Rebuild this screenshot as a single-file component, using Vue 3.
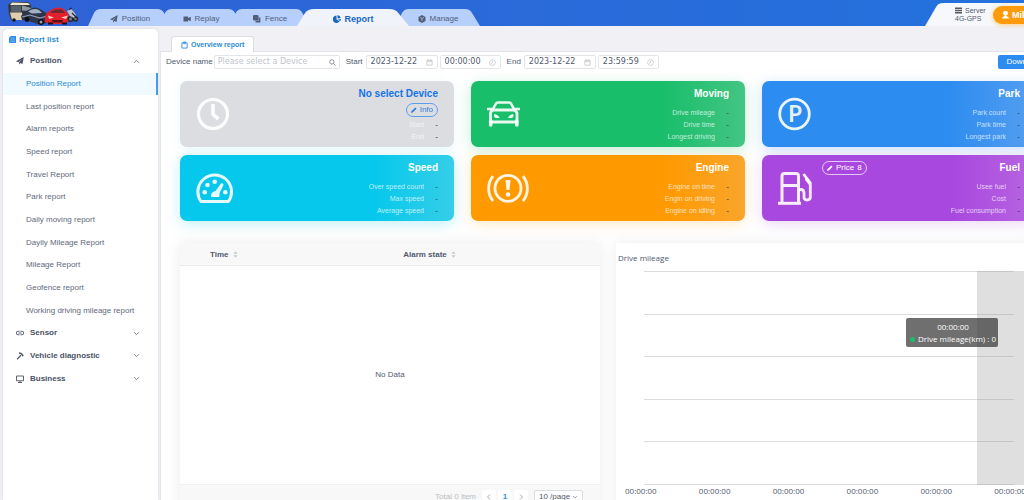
<script setup>
import { ref } from 'vue'

const tabs = [
  { name: 'Position', icon: 'plane' },
  { name: 'Replay', icon: 'video' },
  { name: 'Fence', icon: 'copy' },
  { name: 'Report', icon: 'pie', active: true },
  { name: 'Manage', icon: 'cube' }
]

const reports = [
  'Position Report',
  'Last position report',
  'Alarm reports',
  'Speed report',
  'Travel Report',
  'Park report',
  'Daily moving report',
  'Dayily Mileage Report',
  'Mileage Report',
  'Geofence report',
  'Working driving mileage report'
]
const activeReport = ref('Position Report')

const groups = [
  { name: 'Sensor', icon: 'link' },
  { name: 'Vehicle diagnostic', icon: 'hammer' },
  { name: 'Business', icon: 'monitor' }
]

const cards = [
  { key: 'device', title: 'No select Device', rows: ['Start', 'End'] },
  { key: 'moving', title: 'Moving', rows: ['Drive mileage', 'Drive time', 'Longest driving'] },
  { key: 'park', title: 'Park', rows: ['Park count', 'Park time', 'Longest park'] },
  { key: 'speed', title: 'Speed', rows: ['Over speed count', 'Max speed', 'Average speed'] },
  { key: 'engine', title: 'Engine', rows: ['Engine on time', 'Engin on driving', 'Engine on idling'] },
  { key: 'fuel', title: 'Fuel', rows: ['Usee fuel', 'Cost', 'Fuel consumption'] }
]

const device = ref('')
const startDate = ref('2023-12-22')
const startTime = ref('00:00:00')
const endDate = ref('2023-12-22')
const endTime = ref('23:59:59')
</script>

<template>
  <div class="app">
    <header class="topbar">
      <svg class="logo" viewBox="0 0 72 24" aria-hidden="true">
        <path d="M0 3 L4 0 H20 L23 3 L24 18 H3 L1 12Z" fill="#3a3838" />
        <path d="M3 3.500 H13 V10 H3Z" fill="#56626b" />
        <path d="M2 10.500 H14 L15 18 H4Z" fill="#e0cfae" />
        <path d="M14 3.500 L23 6 V9 L14 8.500Z" fill="#8d9aa3" />
        <path d="M4 .5 L20 1 L22 3 L2 3Z" fill="#efe6cf" />
        <circle cx="6" cy="18" r="1.800" fill="#161616" />
        <path d="M13 14 Q17 9 22 7 Q27 4 32 7 L38 11 L41 15 L38 21 L33 23 L20 19 L14 18Z" fill="#2c354c" />
        <path d="M20 9.500 Q26 5.500 31 8 L34 11 L24 11.500Z" fill="#a3afc2" />
        <path d="M14 15 L22 13 L32 16 L39 14" stroke="#8f9bb4" stroke-width="1.200" fill="none" />
        <circle cx="19" cy="17.500" r="2.400" fill="#0e0f14" />
        <circle cx="33" cy="20" r="2.900" fill="#0e0f14" />
        <circle cx="33" cy="20" r="1.500" fill="#9b9fa8" />
        <path d="M37 15 Q38 10 43 8 Q48 4.500 54 6 L59 10 Q62 14 61 19 L57 22 H42 L37 20Z" fill="#e3202b" />
        <path d="M43 9.500 Q48 6.500 54 7.500 L57 11 H43Z" fill="#6b2a33" />
        <path d="M40 13.500 L46 15.500 L41 17Z M53 15.500 L60 13.500 L58 17Z" fill="#fbc9c4" />
        <path d="M44 18 H55 L54 20.500 H45Z" fill="#5a1016" />
        <path d="M40 21.500 H45 M54 21.500 H59" stroke="#1b1014" stroke-width="2" />
        <circle cx="62.500" cy="17" r="2.400" fill="#6d737d" stroke="#22252c" stroke-width="1.300" />
        <circle cx="67.500" cy="17" r="2" fill="#6d737d" stroke="#22252c" stroke-width="1.300" />
        <path d="M59 9 L63 7 L66 10 L68 13 L66 16 L62 14Z" fill="#bcc3cc" />
        <path d="M61 7.500 L64 6 M64 11 L68 15" stroke="#272b34" stroke-width="1.200" />
      </svg>
      <nav class="tabs">
        <button v-for="tab in tabs" :key="tab.name" class="tab" :class="[tab.icon, { active: tab.active }]">
          <svg class="tab-shape" viewBox="0 0 84 17" preserveAspectRatio="none" aria-hidden="true">
            <path d="M0 17 L6 4 Q8 0 13 0 H69 Q74 0 76 4 L84 17Z" />
          </svg>
          <svg class="tab-icon" viewBox="0 0 16 16" aria-hidden="true">
            <path v-if="tab.icon === 'plane'" d="M15.500 0 L13 14 L8.500 12 L6 15.500 V11 L12 4.500 L4.500 10.300 L0 8.500Z" />
            <path v-if="tab.icon === 'video'" d="M1 3 H10 V6 L15.500 3.500 V12.500 L10 10 V13 H1Z" />
            <template v-if="tab.icon === 'copy'">
              <rect x="0" y="0" width="11" height="11" rx="2" />
              <path d="M13 5 V13 H5" fill="none" stroke="currentColor" stroke-width="3.500" />
            </template>
            <path v-if="tab.icon === 'pie'" d="M7 1 A7.500 7.500 0 1 0 13 13 L7 8.500Z M9 0 A7.500 7.500 0 0 1 15.500 6 L9 7Z M10 9 L16 8 A7 7 0 0 1 14 12.500Z" />
            <template v-if="tab.icon === 'cube'">
              <path d="M8 0 L15 4 V12 L8 16 L1 12 V4Z" />
              <path d="M4 4.800 L8 7 L12 4.800 M8 7 V12" fill="none" stroke="#bdd4fb" stroke-width="1.300" />
            </template>
          </svg>
          <span>{{ tab.name }}</span>
        </button>
      </nav>
      <div class="account">
        <svg class="account-shape" viewBox="0 0 130 23" preserveAspectRatio="none" aria-hidden="true">
          <path d="M0 23 L11 4 Q13 0 18 0 H130 V23Z" fill="#f7f8fb" />
        </svg>
        <div class="server">
          <div class="server-name">
            <svg viewBox="0 0 8 7" aria-hidden="true"><path d="M0 1 H8 M0 3.500 H8 M0 6 H8" stroke="#55595f" stroke-width="1.600" /></svg>
            Server
          </div>
          <div>4G-GPS</div>
        </div>
        <button class="user">
          <svg viewBox="0 0 8 9" aria-hidden="true"><path d="M4 0 A2.300 2.300 0 0 1 5 4.500 V5.500 Q8 6 8 8.500 H0 Q0 6 3 5.500 V4.500 A2.300 2.300 0 0 1 4 0Z" fill="#fff" /></svg>
          Mike
        </button>
      </div>
    </header>

    <div class="body">
      <aside class="sidebar">
        <h2 class="side-title">
          <svg viewBox="0 0 8 8" aria-hidden="true">
            <path d="M2 0 H8 V8 H1 Q0 8 0 7 V2Z" fill="#2d8cf0" />
            <path d="M2 2.500 H6.500 M2 4.500 H6.500 M1 6.500 H7" stroke="#a9d1fa" stroke-width=".6" />
          </svg>
          Report list
        </h2>
        <nav class="menu">
          <button class="group">
            <svg class="group-icon" viewBox="0 0 16 16" aria-hidden="true">
              <path d="M15.500 0 L13 14 L8.500 12 L6 15.500 V11 L12 4.500 L4.500 10.300 L0 8.500Z" fill="currentColor" />
            </svg>
            <span>Position</span>
            <svg class="chevron" viewBox="0 0 6 6" aria-hidden="true"><path d="M1 4 L3 2 L5 4" /></svg>
          </button>
          <a
            v-for="item in reports"
            :key="item"
            href="#"
            class="item"
            :class="{ active: item === activeReport }"
            @click.prevent="activeReport = item"
          >{{ item }}</a>
          <button v-for="group in groups" :key="group.name" class="group">
            <svg class="group-icon" viewBox="0 0 16 16" fill="none" stroke="currentColor" stroke-width="1.800" aria-hidden="true">
              <path v-if="group.icon === 'link'" d="M7 4.500 H4 A3.500 3.500 0 0 0 4 11.500 H7 M9 4.500 H12 A3.500 3.500 0 0 1 12 11.500 H9 M5 8 H11" />
              <template v-if="group.icon === 'hammer'">
                <path d="M2 14.500 L10 6.500" stroke-width="2.200" />
                <path d="M6 2 Q10 2 12 5 L14.500 8" stroke-width="3" />
              </template>
              <path v-if="group.icon === 'monitor'" d="M1 2 H15 V11.500 H1Z M4 15 H12 M8 12 V15" />
            </svg>
            <span>{{ group.name }}</span>
            <svg class="chevron" viewBox="0 0 6 6" aria-hidden="true"><path d="M1 2 L3 4 L5 2" /></svg>
          </button>
        </nav>
      </aside>

      <main class="main">
        <div class="pages">
          <button class="page-tab">
            <svg viewBox="0 0 8 9" aria-hidden="true"><path d="M1 2 H7 V8 H1Z M3 1 H5 V3 H3Z" fill="none" stroke="#2d8cf0" /></svg>
            Overview report
          </button>
        </div>

        <div class="content">
          <form class="filters" @submit.prevent>
            <label for="device">Device name</label>
            <div class="field device">
              <input id="device" v-model="device" type="text" placeholder="Please select a Device" />
              <svg viewBox="0 0 8 8" aria-hidden="true"><circle cx="3.300" cy="3.300" r="2.500" /><path d="M5.200 5.200 L7.500 7.500" /></svg>
            </div>
            <label for="start">Start</label>
            <div class="field date">
              <input id="start" v-model="startDate" type="text" />
              <svg class="pale" viewBox="0 0 8 8" aria-hidden="true"><path d="M1 1.500 H7 V7 H1Z M1 3 H7 M2.500 0 V2 M5.500 0 V2" /></svg>
            </div>
            <div class="field time">
              <input v-model="startTime" type="text" aria-label="Start time" />
              <svg class="pale" viewBox="0 0 8 8" aria-hidden="true"><circle cx="4" cy="4" r="3.300" /><path d="M4 2 V4 L2.500 5" /></svg>
            </div>
            <label for="end">End</label>
            <div class="field date">
              <input id="end" v-model="endDate" type="text" />
              <svg class="pale" viewBox="0 0 8 8" aria-hidden="true"><path d="M1 1.500 H7 V7 H1Z M1 3 H7 M2.500 0 V2 M5.500 0 V2" /></svg>
            </div>
            <div class="field time">
              <input v-model="endTime" type="text" aria-label="End time" />
              <svg class="pale" viewBox="0 0 8 8" aria-hidden="true"><circle cx="4" cy="4" r="3.300" /><path d="M4 2 V4 L2.500 5" /></svg>
            </div>
            <button class="download" type="button">Download</button>
          </form>

          <section class="cards">
            <article v-for="card in cards" :key="card.key" class="card" :class="card.key">
              <svg class="card-icon" viewBox="0 0 44 36" fill="none" stroke="currentColor" aria-hidden="true">
                <template v-if="card.key === 'device'">
                  <circle cx="17" cy="18" r="14.500" stroke-width="3.200" />
                  <path d="M17 8 V18.500 L22.500 23" stroke-width="3.600" />
                </template>
                <template v-if="card.key === 'moving'">
                  <path d="M5.500 14 L9 7.500 Q9.500 6.500 11 6.500 H22 Q23.500 6.500 24 7.500 L27.500 14" stroke-width="2.600" />
                  <path d="M3.500 26 V17 Q4 14 7 14 H26 Q29 14 30 17 V26Z" stroke-width="2.800" />
                  <path d="M0 13 H5 M28 13 H33" stroke-width="2.600" />
                  <path d="M3.700 25 V29 M29.800 25 V29" stroke-width="3.600" stroke-linecap="round" />
                  <path d="M7.500 18 Q12 19 12.500 22 H8.500 Q6 20.500 7.500 18Z M26 18 Q21.500 19 21 22 H25 Q27.500 20.500 26 18Z" fill="currentColor" stroke="none" />
                </template>
                <template v-if="card.key === 'park'">
                  <circle cx="16.500" cy="18" r="14.800" stroke-width="2.800" />
                  <text x="17" y="26" class="park-sign">P</text>
                </template>
                <template v-if="card.key === 'speed'">
                  <path d="M5 31.500 A16.800 16.800 0 1 1 32.400 31.500Z" stroke-width="3" stroke-linejoin="round" />
                  <g fill="currentColor" stroke="none">
                    <circle cx="8.700" cy="22.300" r="2.300" />
                    <circle cx="11.500" cy="15" r="2.300" />
                    <circle cx="18.700" cy="11.800" r="2.300" />
                    <circle cx="29.300" cy="22.300" r="2.300" />
                    <path d="M25 13.500 Q27.500 12.500 27.500 15 L23.500 23 V26 Q23.500 27 22.500 27 H16 Q14.500 27 15 25 Q16 21.500 19.500 21Z" />
                  </g>
                </template>
                <template v-if="card.key === 'engine'">
                  <circle cx="21" cy="18.300" r="13" stroke-width="2.800" />
                  <path d="M6 6 A20 20 0 0 0 6 31 M36 6 A20 20 0 0 1 36 31" stroke-width="2.800" />
                  <path d="M18.500 10 H23.500 L22.500 20 H19.500Z" fill="currentColor" stroke="none" />
                  <circle cx="21" cy="24.500" r="2.300" fill="currentColor" stroke="none" />
                </template>
                <template v-if="card.key === 'fuel'">
                  <path d="M4 32 V6 Q4 3.500 6.500 3.500 H18 Q20.500 3.500 20.500 6 V32 M4 15.500 H20.500" stroke-width="3" />
                  <path d="M0 33.300 H23" stroke-width="3" />
                  <path d="M21 19.500 H22.500 Q26 19.500 26 23 V27 Q26 30 29 30 Q32.300 30 32.300 27 V13 L25.500 4" stroke-width="2.800" />
                  <path d="M27 6 V10 L31 15 V9.500Z" fill="currentColor" stroke="none" />
                </template>
              </svg>
              <button v-if="card.key === 'fuel'" class="pill price">
                <svg viewBox="0 0 7 7" aria-hidden="true"><path d="M0 7 L.5 5 L5 .5 L6.500 2 L2 6.500Z" /></svg>
                <span>Price</span><span>8</span>
              </button>
              <div class="card-info">
                <h3>{{ card.title }}</h3>
                <button v-if="card.key === 'device'" class="pill">
                  <svg viewBox="0 0 7 7" aria-hidden="true"><path d="M0 7 L.5 5 L5 .5 L6.500 2 L2 6.500Z" /></svg>
                  <span>Info</span>
                </button>
                <dl>
                  <div v-for="row in card.rows" :key="row">
                    <dt>{{ row }}</dt>
                    <dd>-</dd>
                  </div>
                </dl>
              </div>
            </article>
          </section>

          <section class="panels">
            <div class="panel alarms">
              <table>
                <thead>
                  <tr>
                    <th v-for="head in ['Time', 'Alarm state']" :key="head">
                      {{ head }}
                      <svg viewBox="0 0 6 8" aria-hidden="true"><path d="M3 0 L5.500 3 H.5Z M3 8 L5.500 5 H.5Z" fill="#c5c8ce" /></svg>
                    </th>
                  </tr>
                </thead>
                <tbody>
                  <tr><td colspan="2">No Data</td></tr>
                </tbody>
              </table>
              <div class="pager">
                <span class="total">Total 0 item</span>
                <button aria-label="Previous page"><svg viewBox="0 0 6 8" aria-hidden="true"><path d="M4 1.500 L1.500 4 L4 6.500" /></svg></button>
                <button class="current">1</button>
                <button aria-label="Next page"><svg viewBox="0 0 6 8" aria-hidden="true"><path d="M2 1.500 L4.500 4 L2 6.500" /></svg></button>
                <div class="page-size">
                  <select aria-label="Rows per page"><option>10 /page</option></select>
                  <svg viewBox="0 0 6 6" aria-hidden="true"><path d="M1 2 L3 4 L5 2" /></svg>
                </div>
              </div>
            </div>

            <div class="panel chart">
              <h4>Drive mileage</h4>
              <div class="plot">
                <div class="lines"><i v-for="n in 6" :key="n"></i></div>
                <div class="band"></div>
                <div class="tip">
                  <div>00:00:00</div>
                  <div class="tip-row"><b></b>Drive mileage(km) : 0</div>
                </div>
              </div>
              <div class="axis"><span v-for="n in 6" :key="n">00:00:00</span></div>
            </div>
          </section>
        </div>
      </main>
    </div>
  </div>
</template>

<style>
body {
  margin: 0;
  overflow: hidden;
}
</style>

<style scoped>
* {
  box-sizing: border-box;
}
.app {
  height: 100vh;
  overflow: hidden;
  display: flex;
  flex-direction: column;
  background: #f0f0f5;
  color: #515a6e;
  font: 8px/12px "Liberation Sans", Arial, sans-serif;
}
button,
input,
select {
  font: inherit;
  color: inherit;
  border: 0;
  margin: 0;
  padding: 0;
  background: none;
}
svg {
  flex: none;
  display: block;
}
h2, h3, h4, dl, dd {
  margin: 0;
}

/* top bar */
.topbar {
  flex: none;
  width: calc(100% + 32px);
  height: 26px;
  display: flex;
  align-items: flex-end;
  background: linear-gradient(90deg, #2f61d5, #2b68d8 40%, #2373dd);
}
.logo {
  width: 72px;
  height: 24px;
  margin-left: 8px;
}
.tabs {
  display: flex;
  margin-left: 8px;
}
.tab {
  position: relative;
  isolation: isolate;
  width: 84px;
  height: 17px;
  margin-right: -13px;
  display: flex;
  align-items: center;
  justify-content: center;
  gap: 4px;
  padding-top: 2px;
  color: #515e78;
}
.tab-shape {
  position: absolute;
  inset: 0;
  width: 100%;
  height: 100%;
  z-index: -1;
  fill: #b7d0fb;
}
.tab-icon {
  width: 8px;
  height: 8px;
  fill: currentColor;
}
.tab.copy {
  width: 80px;
}
.tab.active {
  z-index: 1;
  width: 112px;
  color: #1668c0;
  font-size: 9px;
  font-weight: bold;
}
.tab.active .tab-shape {
  fill: #f0f3fa;
}
.account {
  position: relative;
  isolation: isolate;
  width: 131px;
  height: 23px;
  margin-left: auto;
  padding-left: 30px;
  display: flex;
  align-items: center;
  font-size: 7px;
  line-height: 8px;
}
.account-shape {
  position: absolute;
  inset: 0;
  width: 100%;
  height: 100%;
  z-index: -1;
}
.server {
  width: 38px;
}
.server-name {
  display: flex;
  align-items: center;
  gap: 3px;
}
.server-name svg {
  width: 7px;
  height: 7px;
}
.user {
  display: flex;
  align-items: center;
  gap: 3px;
  height: 18px;
  padding: 0 12px 0 9px;
  border-radius: 9px;
  background: #ff9b0a;
  color: #fff;
  font-size: 9px;
  font-weight: bold;
  box-shadow: 0 1px 4px rgba(255, 153, 0, .5);
}
.user svg {
  width: 7px;
  height: 8px;
}

/* sidebar */
.body {
  flex: 1;
  min-height: 0;
  display: flex;
}
.sidebar {
  flex: none;
  width: 155px;
  margin: 3px 2px 0 3px;
  background: #fff;
  border-radius: 5px 5px 0 0;
  box-shadow: 0 0 3px rgba(60, 70, 90, .12);
}
.side-title {
  display: flex;
  align-items: center;
  gap: 3px;
  height: 21px;
  padding-left: 6px;
  font-size: 8px;
  color: #2d8cd0;
}
.side-title svg {
  width: 7px;
  height: 7px;
}
.menu {
  display: grid;
  grid-auto-rows: 1fr;
  min-height: 340px;
}
.group {
  display: flex;
  align-items: center;
  gap: 6px;
  padding: 0 18px 0 13px;
  font-weight: bold;
  color: #4a5266;
}
.group-icon {
  width: 8px;
  height: 8px;
}
.chevron {
  width: 7px;
  height: 7px;
  margin-left: auto;
  fill: none;
  stroke: #6b7282;
  stroke-width: .8;
}
.item {
  display: flex;
  align-items: center;
  padding-left: 23px;
  color: #62697a;
  text-decoration: none;
}
.item.active {
  background: #f0faff;
  border-right: 2px solid #4a9be4;
  color: #2d8cd0;
}

/* main area */
.main {
  flex: 1;
  min-width: 0;
  margin-right: -32px;
  display: flex;
  flex-direction: column;
}
.pages {
  flex: none;
  height: 26px;
  padding-left: 11px;
  display: flex;
  align-items: flex-end;
  border-bottom: 1px solid #e2e3e8;
}
.page-tab {
  display: flex;
  align-items: center;
  gap: 3px;
  height: 16px;
  margin-bottom: -1px;
  padding: 0 9px;
  border: 1px solid #dcdee2;
  border-bottom: 0;
  border-radius: 3px 3px 0 0;
  background: #fff;
  font-size: 7px;
  font-weight: bold;
  color: #2d8cd0;
  white-space: nowrap;
}
.page-tab svg {
  width: 7px;
  height: 8px;
}
.content {
  flex: 1;
  min-height: 0;
  overflow: hidden;
  padding: 3px 20px 0;
  background: #fff;
  border-left: 1px solid #e4e5e9;
}
.filters {
  display: flex;
  align-items: center;
  height: 14px;
  margin: 0 -14px 12px -15px;
}
.filters label {
  margin: 0 3px 0 6px;
}
.filters label:first-child {
  margin: 0 1px 0 0;
}
.field {
  display: flex;
  align-items: center;
  height: 14px;
  padding: 0 4px;
  border: 1px solid #e3e5e9;
  border-radius: 2px;
  font-family: "DejaVu Sans", Verdana, sans-serif;
}
.field input {
  flex: 1;
  min-width: 0;
  width: 0;
  height: 12px;
  outline: 0;
}
.field input::placeholder {
  color: #c0c4cc;
  opacity: 1;
}
.field svg {
  width: 7px;
  height: 7px;
  fill: none;
  stroke: #808695;
}
.field .pale {
  stroke: #c8cbd1;
}
.field.device {
  width: 126px;
  padding: 0 3px;
}
.field.date {
  width: 72px;
}
.field.time {
  width: 61px;
  margin-left: 2px;
}
.download {
  margin-left: auto;
  height: 14px;
  padding: 0 8px;
  border-radius: 2px;
  background: #2d8cf0;
  color: #fff;
}

/* summary cards */
.cards {
  display: grid;
  grid-template-columns: repeat(3, 1fr);
  gap: 8px 17px;
  margin-left: -1px;
}
.card {
  display: flex;
  align-items: flex-start;
  min-height: 66px;
  padding: 6px 16px 4px;
  border-radius: 7px;
  color: rgba(255, 255, 255, .9);
}
.card-icon {
  width: 44px;
  height: 36px;
  margin-top: 9px;
}
.park-sign {
  font: bold 22px Lato, "Liberation Sans", sans-serif;
  fill: currentColor;
  stroke: none;
  text-anchor: middle;
}
.card.device {
  background: #dcdde1;
  box-shadow: 0 2px 12px rgba(150, 225, 225, .2);
}
.card.moving {
  background: linear-gradient(90deg, #19be6b 70%, #43c583);
  box-shadow: 0 3px 14px rgba(25, 190, 107, .25);
}
.card.park {
  background: linear-gradient(90deg, #2d8cf0 68%, #559ff0);
  box-shadow: 0 3px 14px rgba(45, 140, 240, .25);
}
.card.speed {
  background: linear-gradient(90deg, #05c8ec 70%, #35cee8);
  box-shadow: 0 3px 14px rgba(5, 200, 236, .25);
}
.card.engine {
  background: linear-gradient(90deg, #f90 70%, #f9a52c);
  box-shadow: 0 3px 14px rgba(255, 153, 0, .22);
}
.card.fuel {
  background: linear-gradient(90deg, #a948df 70%, #b765e0);
  box-shadow: 0 3px 14px rgba(169, 72, 223, .22);
}
.card-info {
  margin-left: auto;
  display: flex;
  flex-direction: column;
  align-items: flex-end;
}
.card h3 {
  font-size: 10px;
  line-height: 14px;
  color: #fff;
}
.card.device h3 {
  color: #1473ea;
}
.card dl {
  margin-top: 6px;
  font-size: 7px;
}
.card.device dl {
  margin-top: 2px;
}
.card dl div {
  display: flex;
  justify-content: flex-end;
}
.card dt {
  color: rgba(255, 255, 255, .72);
}
.card dd {
  width: 14px;
  text-align: right;
  color: #303643;
  font-size: 8px;
}
.pill {
  display: flex;
  align-items: center;
  gap: 3px;
  height: 14px;
  margin-top: 2px;
  padding: 0 4px;
  border: 1px solid #5c9fe6;
  border-radius: 7px;
  color: #2d7fdd;
  white-space: nowrap;
}
.pill svg {
  width: 6px;
  height: 6px;
  fill: currentColor;
}
.pill.price {
  margin-top: 0;
  border-color: rgba(255, 255, 255, .7);
  color: #fff;
}

/* table and chart */
.panels {
  display: grid;
  grid-template-columns: 1fr 1fr;
  gap: 16px;
  margin: 22px 0 0 -1px;
}
.panel {
  min-width: 0;
  box-shadow: 0 0 14px rgba(0, 0, 0, .08);
}
.alarms {
  background: #f8f8f9;
}
table {
  width: 100%;
  border-collapse: collapse;
  table-layout: fixed;
}
th {
  height: 22px;
  padding: 2px 0 0 30px;
  text-align: left;
  border-bottom: 1px solid #e8eaec;
}
th:first-child {
  width: 46%;
}
th svg {
  display: inline-block;
  width: 5px;
  height: 7px;
  margin-left: 2px;
  vertical-align: -1px;
}
td {
  height: 219px;
  padding: 0;
  text-align: center;
  background: #fff;
  border-bottom: 1px solid #f0f1f3;
}
.pager {
  display: flex;
  align-items: center;
  justify-content: flex-end;
  gap: 2px;
  height: 36px;
  padding: 0 17px 12px 0;
}
.total {
  margin-right: 4px;
  color: #b9bdc5;
}
.pager button {
  display: flex;
  align-items: center;
  justify-content: center;
  width: 14px;
  height: 14px;
  border-radius: 2px;
  background: #fff;
}
.pager .current {
  color: #2d8cf0;
  font-weight: bold;
}
.pager svg {
  width: 6px;
  height: 8px;
  fill: none;
  stroke: #a5aab3;
}
.page-size {
  display: flex;
  align-items: center;
  height: 14px;
  margin-left: 4px;
  padding: 0 4px;
  border: 1px solid #dcdee2;
  border-radius: 2px;
  background: #fff;
}
.page-size select {
  appearance: none;
  width: 33px;
}
.chart {
  background: #fff;
  font-family: "Open Sans", "Noto Sans", sans-serif;
}
.chart h4 {
  padding: 9px 2px 7px;
  font-size: 8px;
  font-weight: normal;
}
.plot {
  position: relative;
  height: 214px;
  margin: 0 22px 0 28px;
}
.lines {
  height: 100%;
  display: flex;
  flex-direction: column;
  justify-content: space-between;
}
.lines i {
  height: 1px;
  background: #dcdcdc;
}
.band {
  position: absolute;
  top: 0;
  bottom: 0;
  right: -22px;
  left: 90%;
  background: rgba(150, 150, 150, .3);
}
.tip {
  position: absolute;
  top: 47px;
  right: 16px;
  padding: 3px 2px 2px 4px;
  border-radius: 2px;
  background: rgba(50, 50, 50, .7);
  color: #fff;
  text-align: center;
  white-space: nowrap;
}
.tip-row {
  display: flex;
  align-items: center;
  gap: 3px;
}
.tip b {
  width: 5px;
  height: 5px;
  border-radius: 50%;
  background: #19be6b;
}
.axis {
  display: flex;
  justify-content: space-between;
  padding: 0 10px 0 9px;
}
</style>
